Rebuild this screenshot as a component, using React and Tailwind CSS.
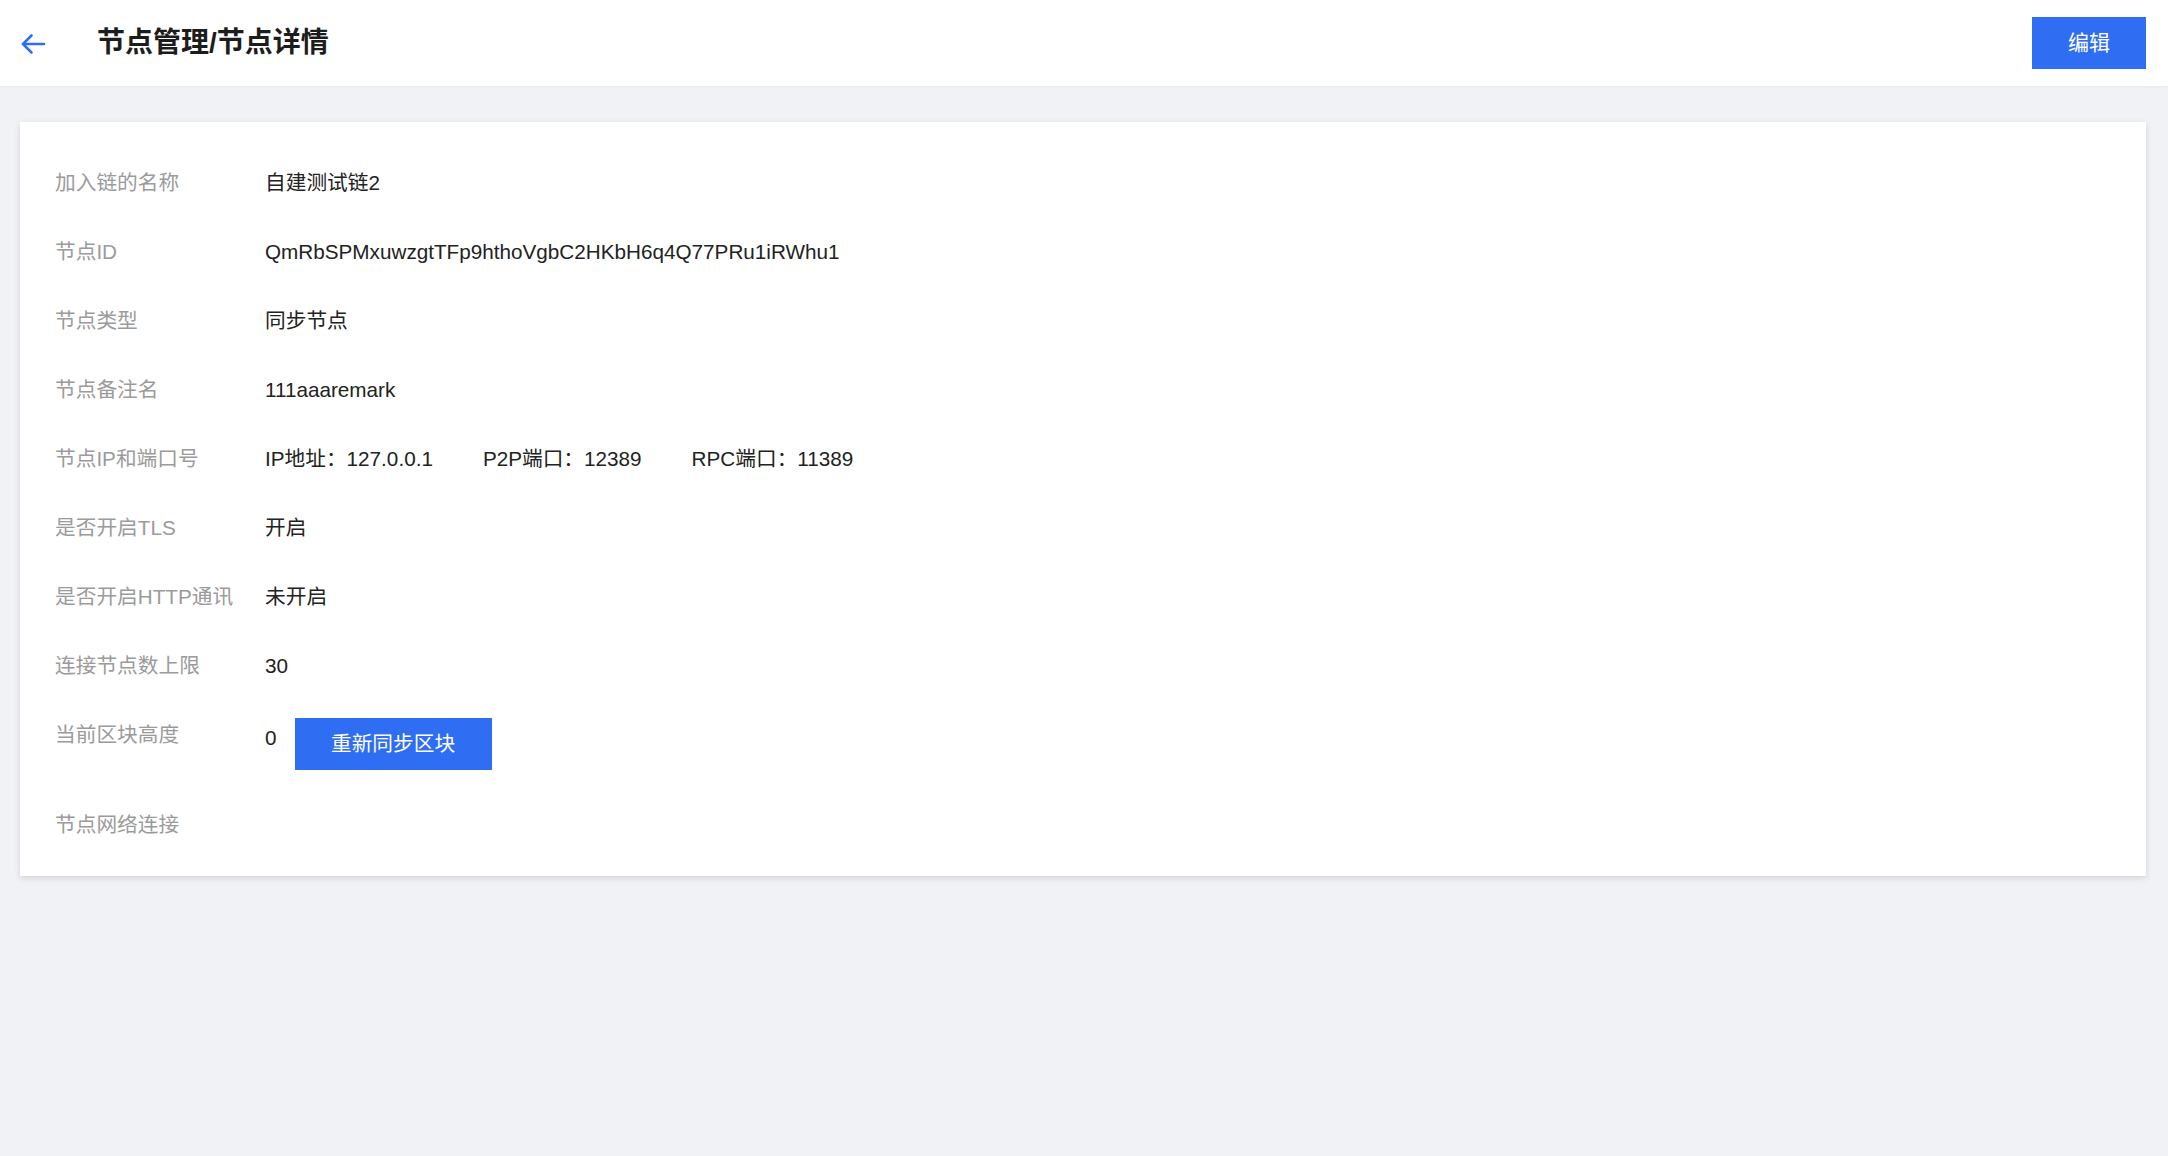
import React from 'react';

const font = { fontFamily: '"Liberation Sans", "Noto Sans CJK SC", sans-serif' };

const rows = [
  { label: '加入链的名称', value: '自建测试链2' },
  { label: '节点ID', value: 'QmRbSPMxuwzgtTFp9hthoVgbC2HKbH6q4Q77PRu1iRWhu1' },
  { label: '节点类型', value: '同步节点' },
  { label: '节点备注名', value: '111aaaremark' },
  {
    label: '节点IP和端口号',
    value: (
      <div className="flex gap-[50px]">
        <span>IP地址：127.0.0.1</span>
        <span>P2P端口：12389</span>
        <span>RPC端口：11389</span>
      </div>
    ),
  },
  { label: '是否开启TLS', value: '开启' },
  { label: '是否开启HTTP通讯', value: '未开启' },
  { label: '连接节点数上限', value: '30' },
];

const BackArrow = () => (
  <svg width="26" height="22" viewBox="0 0 26 22" fill="none" stroke="currentColor" strokeWidth="2.6" strokeLinecap="round" strokeLinejoin="round">
    <path d="M24 11H3" />
    <path d="M11.5 2.5 3 11l8.5 8.5" />
  </svg>
);

const NodeDetailPage = () => {
  return (
    <div className="min-h-screen bg-[#f1f2f6]" style={font}>
      {/* Header */}
      <header className="h-[86px] bg-white flex items-center justify-between pl-[20px] pr-[22px] shadow-[0_1px_2px_rgba(0,0,0,0.04)]">
        <div className="flex items-center">
          <button className="text-[#2f6ef2] pt-[2px]">
            <BackArrow />
          </button>
          <h1 className="ml-[51px] text-[28px] font-bold text-[#1c1c1c]">节点管理/节点详情</h1>
        </div>
        <button className="w-[114px] h-[52px] bg-[#2f6ef2] text-white text-[21px]">编辑</button>
      </header>

      {/* Content */}
      <div className="pt-[36px] pl-[20px] pr-[22px]">
        <div className="bg-white pt-[26px] pb-[17px] pl-[35px] shadow-[0_2px_6px_rgba(0,0,0,0.13)]">
          {rows.map((row) => (
            <div key={row.label} className="flex py-[20.5px] text-[20.7px] leading-[28px]">
              <div className="w-[210px] text-[#9b9b9b]">{row.label}</div>
              <div className="text-[#222]">{row.value}</div>
            </div>
          ))}

          <div className="flex items-start pt-[18px] pb-[20px] text-[20.7px] leading-[28px]">
            <div className="w-[210px] mt-[3px] text-[#9b9b9b]">当前区块高度</div>
            <div className="flex items-start">
              <span className="mt-[6px] text-[#222]">0</span>
              <button className="ml-[18px] w-[197px] h-[52px] bg-[#2f6ef2] text-white text-[20.7px]">重新同步区块</button>
            </div>
          </div>

          <div className="flex py-[20.5px] text-[20.7px] leading-[28px]">
            <div className="w-[210px] text-[#9b9b9b]">节点网络连接</div>
          </div>
        </div>
      </div>
    </div>
  );
};

export default NodeDetailPage;
